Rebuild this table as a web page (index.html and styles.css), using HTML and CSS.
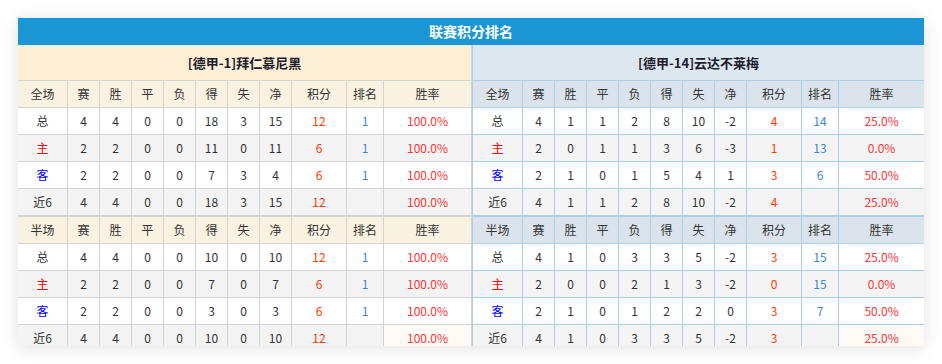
FILE: index.html
```html
<!DOCTYPE html>
<html lang="zh-CN">
<head>
<meta charset="utf-8">
<title>联赛积分排名</title>
<link rel="stylesheet" href="styles.css">
</head>
<body>
<div class="board">
  <div class="board-title">联赛积分排名</div>
  <div class="tables">
    <table class="stand home">
      <colgroup>
        <col class="w-name"><col class="w-n"><col class="w-n"><col class="w-n"><col class="w-n"><col class="w-n"><col class="w-n"><col class="w-n"><col class="w-pts"><col class="w-rank"><col class="w-rate">
      </colgroup>
      <tr class="team-row"><td colspan="11">[德甲-1]拜仁慕尼黑</td></tr>
      <tr class="head-row"><td>全场</td><td>赛</td><td>胜</td><td>平</td><td>负</td><td>得</td><td>失</td><td>净</td><td>积分</td><td>排名</td><td>胜率</td></tr>
      <tr><td>总</td><td>4</td><td>4</td><td>0</td><td>0</td><td>18</td><td>3</td><td>15</td><td class="pts">12</td><td class="rank">1</td><td class="rate">100.0%</td></tr>
      <tr class="alt"><td class="home-t">主</td><td>2</td><td>2</td><td>0</td><td>0</td><td>11</td><td>0</td><td>11</td><td class="pts">6</td><td class="rank">1</td><td class="rate">100.0%</td></tr>
      <tr><td class="away-t">客</td><td>2</td><td>2</td><td>0</td><td>0</td><td>7</td><td>3</td><td>4</td><td class="pts">6</td><td class="rank">1</td><td class="rate">100.0%</td></tr>
      <tr class="alt section-end"><td>近6</td><td>4</td><td>4</td><td>0</td><td>0</td><td>18</td><td>3</td><td>15</td><td class="pts">12</td><td class="rank"></td><td class="rate">100.0%</td></tr>
      <tr class="head-row"><td>半场</td><td>赛</td><td>胜</td><td>平</td><td>负</td><td>得</td><td>失</td><td>净</td><td>积分</td><td>排名</td><td>胜率</td></tr>
      <tr><td>总</td><td>4</td><td>4</td><td>0</td><td>0</td><td>10</td><td>0</td><td>10</td><td class="pts">12</td><td class="rank">1</td><td class="rate">100.0%</td></tr>
      <tr class="alt"><td class="home-t">主</td><td>2</td><td>2</td><td>0</td><td>0</td><td>7</td><td>0</td><td>7</td><td class="pts">6</td><td class="rank">1</td><td class="rate">100.0%</td></tr>
      <tr><td class="away-t">客</td><td>2</td><td>2</td><td>0</td><td>0</td><td>3</td><td>0</td><td>3</td><td class="pts">6</td><td class="rank">1</td><td class="rate">100.0%</td></tr>
      <tr class="alt"><td>近6</td><td>4</td><td>4</td><td>0</td><td>0</td><td>10</td><td>0</td><td>10</td><td class="pts">12</td><td class="rank"></td><td class="rate hl">100.0%</td></tr>
    </table>
    <table class="stand away">
      <colgroup>
        <col class="w-name-r"><col class="w-n"><col class="w-n"><col class="w-n"><col class="w-n"><col class="w-n"><col class="w-n"><col class="w-n"><col class="w-pts"><col class="w-rank"><col class="w-rate">
      </colgroup>
      <tr class="team-row"><td colspan="11">[德甲-14]云达不莱梅</td></tr>
      <tr class="head-row"><td>全场</td><td>赛</td><td>胜</td><td>平</td><td>负</td><td>得</td><td>失</td><td>净</td><td>积分</td><td>排名</td><td>胜率</td></tr>
      <tr><td>总</td><td>4</td><td>1</td><td>1</td><td>2</td><td>8</td><td>10</td><td>-2</td><td class="pts">4</td><td class="rank">14</td><td class="rate">25.0%</td></tr>
      <tr class="alt"><td class="home-t">主</td><td>2</td><td>0</td><td>1</td><td>1</td><td>3</td><td>6</td><td>-3</td><td class="pts">1</td><td class="rank">13</td><td class="rate">0.0%</td></tr>
      <tr><td class="away-t">客</td><td>2</td><td>1</td><td>0</td><td>1</td><td>5</td><td>4</td><td>1</td><td class="pts">3</td><td class="rank">6</td><td class="rate">50.0%</td></tr>
      <tr class="alt section-end"><td>近6</td><td>4</td><td>1</td><td>1</td><td>2</td><td>8</td><td>10</td><td>-2</td><td class="pts">4</td><td class="rank"></td><td class="rate">25.0%</td></tr>
      <tr class="head-row"><td>半场</td><td>赛</td><td>胜</td><td>平</td><td>负</td><td>得</td><td>失</td><td>净</td><td>积分</td><td>排名</td><td>胜率</td></tr>
      <tr><td>总</td><td>4</td><td>1</td><td>0</td><td>3</td><td>3</td><td>5</td><td>-2</td><td class="pts">3</td><td class="rank">15</td><td class="rate">25.0%</td></tr>
      <tr class="alt"><td class="home-t">主</td><td>2</td><td>0</td><td>0</td><td>2</td><td>1</td><td>3</td><td>-2</td><td class="pts">0</td><td class="rank">15</td><td class="rate">0.0%</td></tr>
      <tr><td class="away-t">客</td><td>2</td><td>1</td><td>0</td><td>1</td><td>2</td><td>2</td><td>0</td><td class="pts">3</td><td class="rank">7</td><td class="rate">50.0%</td></tr>
      <tr class="alt"><td>近6</td><td>4</td><td>1</td><td>0</td><td>3</td><td>3</td><td>5</td><td>-2</td><td class="pts">3</td><td class="rank"></td><td class="rate hl">25.0%</td></tr>
    </table>
  </div>
</div>
</body>
</html>
```
FILE: styles.css
```css
html, body {
  margin: 0;
  padding: 0;
  background: #fff;
}
body {
  padding: 18px;
  font-family: "Noto Sans CJK SC", "Noto Sans", sans-serif;
  font-size: 12px;
  color: #333;
}
.board {
  width: 906px;
  height: 328px;
  overflow: hidden;
  background: #fff;
  box-shadow: 0 2px 16px rgba(0, 0, 0, 0.12);
}
.board-title {
  height: 27px;
  line-height: 27px;
  background: #1b96d4;
  color: #fff;
  font-weight: bold;
  font-size: 14px;
  text-align: center;
}
.tables {
  display: flex;
  align-items: flex-start;
}
.stand {
  flex: none;
  border-collapse: separate;
  border-spacing: 0;
  table-layout: fixed;
}
.stand td {
  padding: 0;
  height: 26px;
  line-height: 26px;
  text-align: center;
  white-space: nowrap;
  overflow: hidden;
  box-sizing: content-box;
  border-right: 1px solid #d3d3d3;
  border-bottom: 1px solid #d3d3d3;
}
.home { width: 454px; }
.away { width: 453px; }
.away td { border-color: #a9d1e6; }
.away td:first-child { border-left: 1px solid #a9d1e6; }
.w-name { width: 50px; }
.w-name-r { width: 51px; }
.w-n { width: 32px; }
.w-pts { width: 55px; }
.w-rank { width: 37px; }
.w-rate { width: 88px; }
.away .w-rate { width: 86px; }

.stand .team-row td {
  height: 35px;
  line-height: 35px;
  font-size: 13px;
  font-weight: bold;
  color: #1d1d2e;
}
.home .team-row td { background: #fcefd6; }
.away .team-row td { background: #dde7ef; }
.home .head-row td { background: #faf2e1; }
.away .head-row td { background: #dbe3ec; }
.stand .alt td { background: #f4f4f4; }
.stand .section-end td { border-bottom-width: 2px; }
.stand td.hl { background: #fffaf6; }

.home-t { color: #f00; }
.away-t { color: #00f; }
.pts { color: #ff3c00; }
.rank { color: #3a86d6; }
.rate { color: #ff3535; }
```
